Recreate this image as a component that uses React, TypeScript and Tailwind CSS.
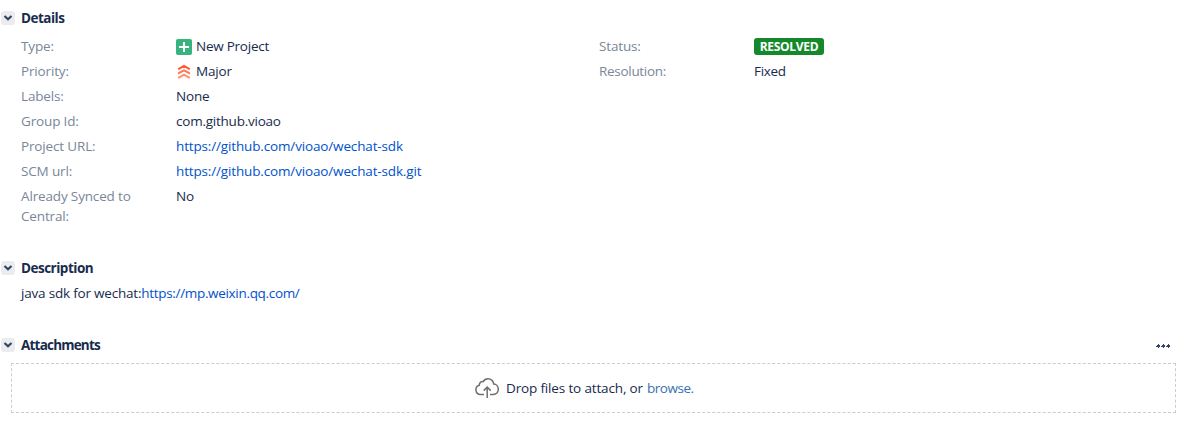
import type { ReactNode } from "react";

function Heading({ title, tracking }: { title: string; tracking: string }) {
  return (
    <div className="flex h-5 items-center pl-px">
      <button aria-label={`Toggle ${title}`} className="flex size-3.5 items-center justify-center rounded-[3px] bg-[#ebecf0]">
        <svg width="14" height="14" viewBox="0 0 14 14" fill="none">
          <path d="M3.5 5 7 8.2 10.5 5" stroke="#344563" strokeWidth="2.2" />
        </svg>
      </button>
      <h4 className={`ml-1.5 text-[13.5px] leading-5 font-bold ${tracking}`}>{title}</h4>
    </div>
  );
}

function Row({ label, children }: { label: string; children: ReactNode }) {
  return (
    <div className="flex pb-[5px]">
      <div className="w-[155px] shrink-0 pr-10 text-[#7a869a]">{label}</div>
      <div className="flex items-center self-start">{children}</div>
    </div>
  );
}

function Link({ children }: { children: string }) {
  return <a href="#" className="text-[#0052cc]">{children}</a>;
}

export default function App() {
  return (
    <main className="h-[446px] w-[1182px] overflow-hidden bg-white pt-2 font-['Open_Sans',sans-serif] text-[13.5px] leading-5 tracking-[-0.15px] text-[#172b4d]">
      <section className="h-[250px]">
        <Heading title="Details" tracking="tracking-[-0.5px]" />
        <div className="flex pt-2 pl-[21px]">
          <div className="w-[578px]">
            <Row label="Type:">
              <svg className="mt-0.5 mr-1" width="16" height="16" viewBox="0 0 16 16">
                <rect width="16" height="16" rx="2" fill="#36b37e" />
                <path d="M8 3v10M3 8h10" stroke="white" strokeWidth="2" />
              </svg>
              <span className="tracking-[-0.25px]">New Project</span>
            </Row>
            <Row label="Priority:">
              <svg className="mt-0.5 mr-1" width="16" height="16" viewBox="0 0 16 16" fill="none" strokeWidth="1.9" strokeLinecap="round">
                <path d="m2.8 4.8 5.2-2.9 5.2 2.9" stroke="#ff5630" />
                <path d="m2.8 9.2 5.2-2.9 5.2 2.9" stroke="#ff7452" />
                <path d="m2.8 13.6 5.2-2.9 5.2 2.9" stroke="#ff8f73" />
              </svg>
              <span>Major</span>
            </Row>
            <Row label="Labels:"><span>None</span></Row>
            <Row label="Group Id:"><span className="tracking-[-0.23px]">com.github.vioao</span></Row>
            <Row label="Project URL:"><Link>https://github.com/vioao/wechat-sdk</Link></Row>
            <Row label="SCM url:"><Link>https://github.com/vioao/wechat-sdk.git</Link></Row>
            <Row label="Already Synced to Central:"><span>No</span></Row>
          </div>
          <div>
            <Row label="Status:">
              <span className="mt-0.5 flex h-[17px] w-[70px] items-center justify-center rounded-[3px] bg-[#14892c] text-[12px] leading-none font-bold tracking-[-0.3px] text-white">RESOLVED</span>
            </Row>
            <div className="tracking-[-0.3px]">
              <Row label="Resolution:"><span>Fixed</span></Row>
            </div>
          </div>
        </div>
      </section>
      <section className="h-[77px]">
        <Heading title="Description" tracking="tracking-[-0.5px]" />
        <p className="pt-[5px] pl-[21px] tracking-[-0.2px]">
          java sdk for wechat:<a href="#" className="tracking-[-0.32px] text-[#0052cc]">https://mp.weixin.qq.com/</a>
        </p>
      </section>
      <section>
        <div className="flex items-center justify-between pr-3">
          <Heading title="Attachments" tracking="tracking-[-0.8px]" />
          <svg width="14" height="5" viewBox="0 0 14 5" fill="#344563" className="mt-0.5" shapeRendering="crispEdges">
            <path d="M1 1h1V0h1v1h1v2H3v1H2V3H0V2h1zM6 1h1V0h1v1h1v2H8v1H7V3H5V2h1zM11 1h1V0h1v1h1v2h-1v1h-1V3h-2V2h1z" />
          </svg>
        </div>
        <div className="mt-2 mr-1.5 ml-[11px] flex h-[50px] items-center border border-dashed border-[#ccc] pl-[463px]">
          <svg width="24" height="20" viewBox="0 0 24 20" fill="none" stroke="#707070" strokeWidth="1.5" className="mr-[7px]">
            <path d="M9 16.5H5.5a4.7 4.7 0 0 1-1.2-9.2C4.2 4.9 6 3.2 8.2 3.7 9.3 1.7 11 .8 13 .8c3.2 0 5.6 2.4 5.7 5.3 2.8.2 4.6 2.5 4.6 5 0 3.1-2.2 5.4-5 5.4H15" />
            <path d="M12.2 20V9.5M8.7 12.6l3.5-3.5 3.5 3.5" />
          </svg>
          <span className="mr-1">Drop files to attach, or</span>
          <a href="#" className="tracking-[-0.45px] text-[#3572b0]">browse.</a>
        </div>
      </section>
    </main>
  );
}
